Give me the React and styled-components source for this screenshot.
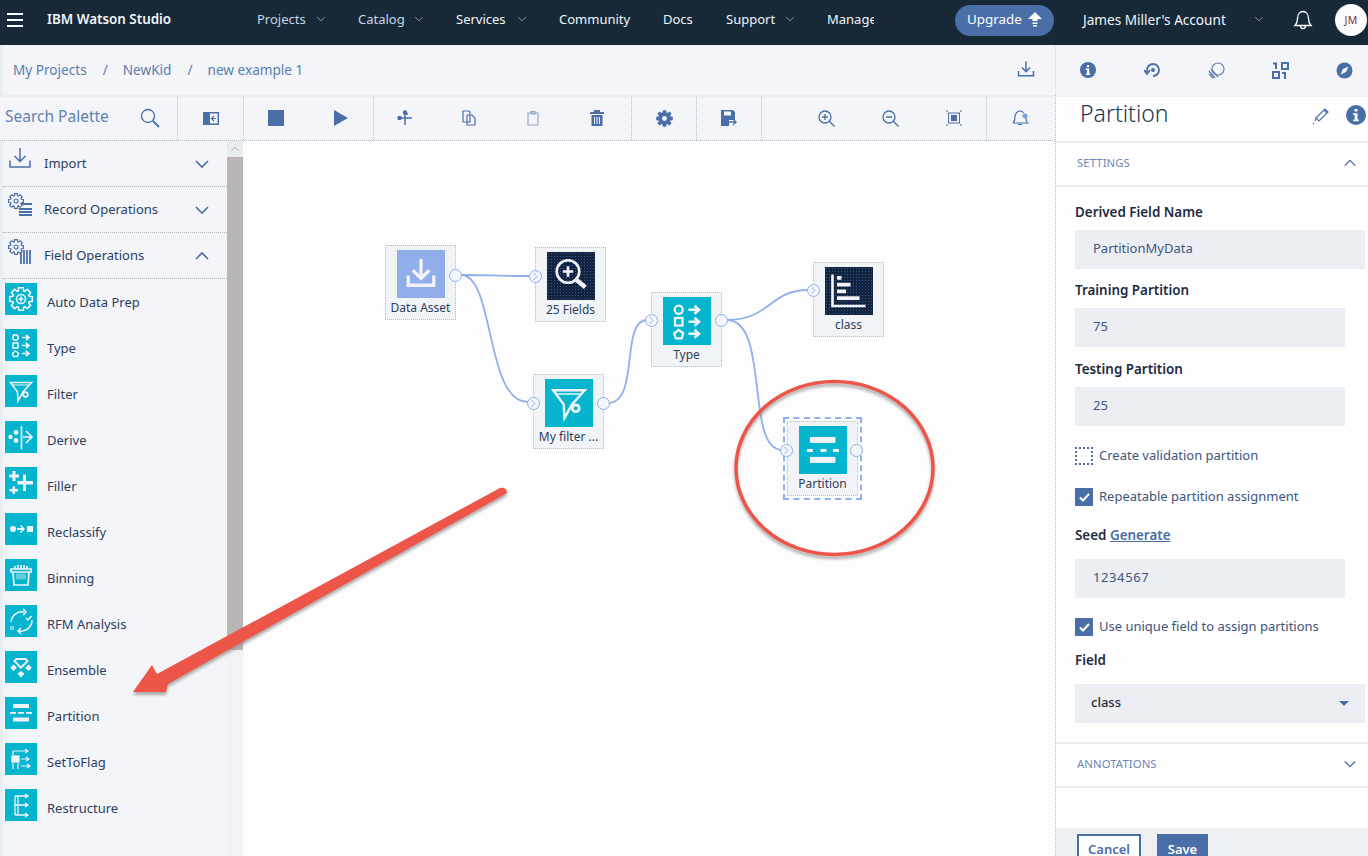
import React from "react";
import styled, { createGlobalStyle } from "styled-components";

const FONT = `"Noto Sans", "Open Sans", Arial, sans-serif`;
const BLUE = "#4a6ea8";
const INK = "#2c3e60";

const Global = createGlobalStyle`
  html, body { margin: 0; padding: 0; background: #fff; }
  * { box-sizing: border-box; }
  body { font-family: ${FONT}; }
`;

const Page = styled.div`
  position: relative; width: 1368px; height: 856px; overflow: hidden;
  display: flex; flex-direction: column; background: #fff;
`;
const Header = styled.header`
  height: 45px; flex: none; background: #172937; color: #f2f5fa; padding-bottom: 5px;
  display: flex; align-items: center; font-size: 13px;
`;
const Burger = styled.div`
  width: 16px; height: 14px; margin: 0 0 0 7px; flex: none;
  border-top: 2px solid #fff; border-bottom: 2px solid #fff; position: relative;
  &::after { content: ""; position: absolute; left: 0; right: 0; top: 4px; height: 2px; background: #fff; }
`;
const Brand = styled.div`
  width: 210px; margin-left: 24px; flex: none; font-weight: 600; font-size: 13.4px; white-space: nowrap; padding-bottom: 2px;
`;
const Nav = styled.nav`
  display: flex; align-items: center; gap: 32px; width: 698px; flex: none; white-space: nowrap; padding-bottom: 2px;
`;
const NavItem = styled.div`
  display: flex; align-items: center; flex: none; width: ${p => p.$w}px; overflow: hidden;
  color: ${p => p.$dim ? "#c9d5e8" : "#f2f5fa"}; justify-content: space-between;
`;
const Upgrade = styled.div`
  width: 99px; height: 31px; border-radius: 16px; background: ${BLUE}; color: #fff; flex: none;
  display: flex; align-items: center; padding: 0 12px 2px; justify-content: space-between; font-size: 13.4px;
`;
const Account = styled.div`
  margin-left: 29px; width: 181px; flex: none; display: flex; justify-content: space-between; align-items: center; white-space: nowrap; font-size: 13.6px; padding-bottom: 2px;
`;
const BellWrap = styled.div`
  margin-left: 29px; width: 20px; height: 22px; flex: none;
`;
const Avatar = styled.div`
  margin-left: 22px; width: 32px; height: 32px; flex: none; border-radius: 50%; background: #fbfbfb; color: #8a3040;
  display: flex; align-items: center; justify-content: center; font-size: 10.5px; letter-spacing: .4px;
`;

const Main = styled.div`
  flex: 1; display: grid; grid-template-columns: 1055px 313px; min-height: 0;
`;
const LeftCol = styled.div`
  display: flex; flex-direction: column; min-height: 0;
`;
const RightCol = styled.div`
  display: flex; flex-direction: column; min-height: 0; position: relative;
`;
const Crumbs = styled.div`
  height: 50px; flex: none; background: #f3f5f8; display: flex; align-items: center; padding: 0 19px 2px 10px;
  font-size: 13.6px; color: #5d7cae; border-left: 3px solid #e9eef4;
`;
const Crumb = styled.span`
  margin-right: ${p => p.$mr}px; white-space: nowrap;
`;
const PushRight = styled.div`
  margin-left: auto; display: flex;
`;
const Toolbar = styled.div`
  height: 46px; flex: none; background: #f3f5f8; display: flex;
  border-top: 2px solid #e9edf2; border-bottom: 1px dotted #aeb6c0;
`;
const ToolGroup = styled.div`
  width: ${p => p.$w}px; flex: none; display: flex; align-items: center; justify-content: ${p => p.$j || "flex-start"};
  border-right: ${p => p.$last ? "none" : "1px dotted #b5bcc6"};
  padding-left: ${p => p.$pl || 0}px; padding-bottom: 1px; gap: ${p => p.$gap || 0}px;
`;
const SearchText = styled.span`
  font-size: 15.5px; color: #5f83b2; padding: 0 0 4px 5px; white-space: nowrap; width: 140px;
`;
const ToolIcon = styled.span`
  width: 20px; height: 20px; flex: none; display: flex; align-items: center; justify-content: center; color: ${BLUE};
  opacity: ${p => p.$off ? .55 : 1}; margin-left: ${p => p.$ml || 0}px;
  svg { display: block; }
`;
const Work = styled.div`
  flex: 1; display: flex; min-height: 0;
`;
const Palette = styled.aside`
  width: 227px; flex: none; background: #f3f5f8; display: flex; flex-direction: column; border-left: 3px solid #e9eef4;
`;
const GroupRow = styled.div`
  height: 46px; flex: none; display: flex; align-items: center; padding: 0 17px 0 5px;
  border-bottom: 1px dotted #aeb6c0; font-size: 13px; color: ${INK}; white-space: nowrap;
`;
const GroupIcon = styled.span`
  width: 28px; height: 30px; flex: none; margin-top: -6px; color: ${BLUE}; margin-right: 8px;
  svg { display: block; }
`;
const GroupLabel = styled.span`
  flex: 1; padding-bottom: 2px;
`;
const ItemList = styled.div`
  display: flex; flex-direction: column; padding-top: 4px; gap: 14px;
`;
const Item = styled.div`
  height: 32px; display: flex; align-items: center; padding-left: 2px; gap: 10px; font-size: 13px; color: ${INK};
`;
const ItemLabel = styled.span`
  padding-top: 6px;
`;
const Tile = styled.div`
  width: ${p => p.$size}px; height: ${p => p.$size}px; flex: none; color: #f1f2fb;
  background: ${p => p.$dots ? "radial-gradient(circle, #2f5aa6 0.7px, #14233c 0.9px) 0 0 / 3px 3px" : (p.$bg || "#05b5ce")};
  svg { display: block; width: 100%; height: 100%; }
`;
const Scroll = styled.div`
  width: 16px; flex: none; display: flex; flex-direction: column;
  background: radial-gradient(circle, #c4c9cf 0.6px, #f0f2f5 0.7px) 0 0 / 2px 2px;
`;
const ScrollUp = styled.div`
  height: 16px; flex: none; background: #e8ebef; color: #8a8f98; display: flex; align-items: center; justify-content: center;
`;
const ScrollThumb = styled.div`
  height: 493px; flex: none; background: radial-gradient(circle, #aab2cc 0.5px, #bab6b7 0.7px) 0 0 / 8px 8px;
`;
const Canvas = styled.main`
  flex: 1; position: relative; background: #fdfdfe; overflow: hidden;
`;
const Wires = styled.svg`
  position: absolute; inset: 0; width: 100%; height: 100%;
`;
const Node = styled.div`
  position: absolute; left: ${p => p.$x - 243}px; top: ${p => p.$y - 141}px; width: 71px; height: 75px;
  background: #f1f4f7; border: 1px dotted #b4bbc4; display: flex; flex-direction: column; align-items: center; padding-top: 4px;
  font-size: 12px; color: ${INK}; white-space: nowrap;
`;
const NodeLabel = styled.span`
  margin-top: 1px; line-height: 18px;
`;
const Port = styled.div`
  position: absolute; left: ${p => p.$x - 243 - 6}px; top: ${p => p.$y - 141 - 6}px; width: 13px; height: 13px; border-radius: 50%;
  border: 1px solid #8fb0ea; background: #f3f6fa; color: #8fb0ea; display: flex; align-items: center; justify-content: center;
`;
const Selection = styled.div`
  position: absolute; left: ${783 - 243}px; top: ${417 - 141}px; width: 79px; height: 83px; border: 2px dashed #8db2ee;
`;
const Overlay = styled.svg`
  position: absolute; left: 0; top: 0; width: 1368px; height: 856px; pointer-events: none;
`;

const IconBar = styled.div`
  height: 50px; flex: none; background: #f3f5f8; display: flex; align-items: center; padding: 0 14px 0 22px; justify-content: space-between;
  border-left: 1px solid #e4e8ee;
`;
const Panel = styled.section`
  flex: 1; display: flex; flex-direction: column; min-height: 0; border-left: 1px dotted #aeb6c0; background: #fefefe;
`;
const TitleRow = styled.div`
  height: 46px; flex: none; display: flex; align-items: center; padding: 0 2px 8px 24px; font-size: 23px; font-weight: 300; color: #25344f; border-top: 2px solid #eef1f5;
`;
const Title = styled.span`
  flex: 1; padding-bottom: 4px;
`;
const Section = styled.div`
  height: 46px; flex: none; display: flex; align-items: center; justify-content: space-between; padding: 0 11px 2px 21px; font-size: 11.3px; letter-spacing: .1px;
  color: #6f86b4; border-top: 2px solid #eaeef3; border-bottom: 2px solid #eaeef3;
`;
const SectionLabel = styled.span`
  padding-bottom: 2px;
`;
const Form = styled.div`
  flex: none; display: flex; flex-direction: column; padding: 16px 3px 0 19px; height: 555px;
`;
const Label = styled.div`
  font-size: 13.4px; font-weight: 600; color: #1f2b40; line-height: 18px; margin: ${p => p.$mt || 0}px 0 ${p => p.$mb || 9}px;
  white-space: nowrap;
`;
const Generate = styled.span`
  color: #4a6ea8; text-decoration: underline;
`;
const Input = styled.div`
  height: 39px; flex: none; width: ${p => p.$w || 270}px; background: #ebeff3; display: flex; align-items: center; padding: 0 0 4px 18px;
  font-size: 13px; color: #40557c; letter-spacing: ${p => p.$ls || 0}px;
`;
const SelectBox = styled(Input)`
  padding: 0 16px 4px 16px; justify-content: space-between; font-weight: 500; color: #1f2b40; font-size: 13px;
`;
const Caret = styled.span`
  width: 0; height: 0; border-left: 5px solid transparent; border-right: 5px solid transparent; border-top: 5px solid ${BLUE}; margin-top: 4px;
`;
const CheckRow = styled.div`
  display: flex; align-items: center; gap: 6px; height: 18px; font-size: 13px; color: #40557c; white-space: nowrap;
  margin: ${p => p.$mt}px 0 0;
`;
const CheckText = styled.span`
  padding-bottom: 2px;
`;
const Box = styled.span`
  width: 18px; height: 18px; flex: none; display: flex; align-items: center; justify-content: center;
  background: ${p => p.$on ? BLUE : "#fff"}; border: ${p => p.$on ? "none" : `2px dotted ${BLUE}`};
`;
const Footer = styled.div`
  flex: 1; background: #eef1f4; display: flex; gap: 16px; padding: 6px 0 0 21px; margin-top: 40px;
`;
const Btn = styled.div`
  height: 32px; width: ${p => p.$w}px; flex: none; display: flex; align-items: center; justify-content: center; font-size: 13px; padding-bottom: 3px; font-weight: 600;
  border: 2px solid ${BLUE}; background: ${p => p.$primary ? BLUE : "#fff"}; color: ${p => p.$primary ? "#fff" : BLUE};
`;

const Chev = ({ up, size = 16, w = 1.6, color = BLUE }) => (
  <svg width={size} height={size} viewBox="0 0 16 16" fill="none" stroke={color} strokeWidth={w}>
    <path d={up ? "M2 11 L8 5 L14 11" : "M2 5 L8 11 L14 5"} />
  </svg>
);
const S = ({ children, size = 20, vb = 20, ...r }) => (
  <svg width={size} height={size} viewBox={`0 0 ${vb} ${vb}`} fill="none" stroke="currentColor" strokeWidth="1.5" {...r}>{children}</svg>
);
const gearPath = (cx, cy, r, R) => {
  let d = "";
  for (let i = 0; i < 8; i++) {
    const a0 = (i * Math.PI) / 4 - 0.2, a1 = (i * Math.PI) / 4 + 0.2, b0 = a1 + 0.12, b1 = a0 + Math.PI / 4 - 0.12;
    const p = (a, q) => `${(cx + q * Math.cos(a)).toFixed(1)} ${(cy + q * Math.sin(a)).toFixed(1)}`;
    d += `${i ? "L" : "M"}${p(a0, R)} L${p(a1, R)} L${p(b0, r)} L${p(b1, r)} `;
  }
  return d + "Z";
};

const tileIcons = {
  gear: <svg viewBox="0 0 32 32" fill="none" stroke="currentColor" strokeWidth="1.6"><path d={gearPath(16, 16, 8.5, 11.5)} /><circle cx="16" cy="16" r="4.500" /><path d="M16 13.500v5M13.500 16h5" /></svg>,
  type: <svg viewBox="0 0 32 32" fill="none" stroke="currentColor" strokeWidth="1.5"><circle cx="10.500" cy="8.500" r="2.700" /><rect x="8" y="14" width="5" height="5" /><path d="M10.500 22l3 2.200-1 3.300h-4l-1-3.300z" /><path d="M17 8.500h7M21 5.800l3 2.700-3 2.700M17 16.500h7M21 13.800l3 2.700-3 2.700M17 24.500h7M21 21.800l3 2.700-3 2.700" strokeWidth="1.700" /></svg>,
  filter: <svg viewBox="0 0 32 32" fill="none" stroke="currentColor" strokeWidth="1.600"><path d="M5.500 7.500h21l-8.500 9.500-5 9-.5-9z" /><path d="M8 10h16" strokeWidth="1" /><circle cx="20.500" cy="19.500" r="2.300" fill="#05b5ce" strokeWidth="1.800" /></svg>,
  derive: <svg viewBox="0 0 32 32" fill="none" stroke="currentColor" strokeWidth="1.700"><path d="M16.500 5v23" /><path d="M18 16h8M21 10l6 6-6 6" /><circle cx="5.500" cy="16" r="1.300" fill="currentColor" /><circle cx="11" cy="11.500" r="1.600" fill="currentColor" /><circle cx="11" cy="19.500" r="1.600" fill="currentColor" /></svg>,
  filler: <svg viewBox="0 0 32 32" fill="currentColor"><path d="M7.500 4h3v3.500h3.500v3H10.500V14h-3V10.500H4v-3h3.500z" /><path d="M18 7.500h3V14h7v3.500h-7V24h-3V17.500h-5.500V14H18z" /><path d="M7.500 19.500h2.500v2.500h3v2.500h-3V27H7.500v-2.500H4.500V22h3z" /></svg>,
  reclass: <svg viewBox="0 0 32 32" fill="currentColor"><circle cx="8" cy="16" r="3" /><rect x="22" y="13" width="6" height="6" /><path d="M12 15h5l-2-2 1-1 4 4-4 4-1-1 2-2h-5z" /></svg>,
  bin: <svg viewBox="0 0 32 32" fill="none" stroke="currentColor" strokeWidth="1.700"><path d="M6 10h20v3H6zM8 13l1 13h14l1-13" /><path d="M10 10V7M13 10V6M16 10V6M19 10V6M22 10V7" /><rect x="12" y="15.500" width="8" height="4" fill="currentColor" opacity=".4" /></svg>,
  rfm: <svg viewBox="0 0 32 32" fill="none" stroke="currentColor" strokeWidth="1.500"><path d="M6 17a11 11 0 0 1 13-10M18 4l3 3-3 3M27 15a11 11 0 0 1-13 11M16 23l-3 3 3 3" /><path d="M21 13l2 2 3.500-4" /><path d="M5 21h4v4H5z" fill="currentColor" opacity=".5" stroke="none" /></svg>,
  ens: <svg viewBox="0 0 32 32" fill="currentColor"><path d="M11 7h10l3 3-8 8-8-8zM12 9l-1.200 1 5.200 5.200 5.200-5.200-1.200-1z" fillRule="evenodd" /><path d="M8.500 13.500l3.300 3.300-3.300 3.300-3.300-3.300zM23.500 13.500l3.300 3.300-3.300 3.300-3.300-3.300zM16 20l3.500 2.800L16 26.500l-3.500-3.700z" /></svg>,
  part: <svg viewBox="0 0 32 32" fill="currentColor"><rect x="8" y="7" width="16" height="4" /><rect x="8" y="20.500" width="16" height="4" /><rect x="5" y="15" width="6" height="1.800" /><rect x="13" y="15" width="6" height="1.800" /><rect x="21" y="15" width="6" height="1.800" /></svg>,
  partNode: <svg viewBox="0 0 32 32" fill="currentColor"><rect x="7.300" y="7.300" width="17" height="4" /><rect x="7.300" y="20.600" width="17" height="4" /><rect x="5.300" y="15.300" width="4" height="2" /><rect x="14.300" y="15.300" width="4" height="2" /><rect x="22.600" y="15.300" width="4" height="2" /></svg>,
  flag: <svg viewBox="0 0 32 32" fill="none" stroke="currentColor" strokeWidth="1.200"><rect x="7" y="13" width="7" height="6" fill="currentColor" /><path d="M8 8h14M20 6l3 2-3 2M16 16h7M21 14l3 2-3 2M16 23h8M22 21l3 2-3 2M8 8v4M8 20v6M13 20v6" /></svg>,
  restr: <svg viewBox="0 0 32 32" fill="none" stroke="currentColor" strokeWidth="1.300"><path d="M10 7v19M10 7h12M10 16h12M10 26h12M20 5l3 2-3 2M20 14l3 2-3 2M20 24l3 2-3 2M13 7v19" /></svg>,
  asset: <svg viewBox="0 0 32 32" fill="none" stroke="currentColor" strokeWidth="2.200"><path d="M16 6v13M10.500 13.500 16 19l5.500-5.500M7.500 17v6.500h17V17" /></svg>,
  zoom: <svg viewBox="0 0 32 32" fill="none" stroke="currentColor" strokeWidth="1.800"><circle cx="14" cy="13" r="7.500" /><path d="M14 9.500v7M10.500 13h7" /><path d="M19.500 18.500l6 5" strokeWidth="3" /></svg>,
  chart: <svg viewBox="0 0 32 32" fill="none" stroke="currentColor"><path d="M5 5v21h22" strokeWidth="1.800" /><path d="M8 6h3v2.500H8zM8 10.500h9V13H8zM8 15h6v2.500H8zM8 19.500h15v2.500H8z" fill="currentColor" stroke="none" /></svg>,
};

const items = [
  ["gear", "Auto Data Prep"], ["type", "Type"], ["filter", "Filter"], ["derive", "Derive"],
  ["filler", "Filler"], ["reclass", "Reclassify"], ["bin", "Binning"], ["rfm", "RFM Analysis"],
  ["ens", "Ensemble"], ["part", "Partition"], ["flag", "SetToFlag"], ["restr", "Restructure"],
];

const DownloadIcon = ({ size = 24, w = 1.4 }) => (
  <svg width={size} height={size} viewBox="0 0 24 24" fill="none" stroke="currentColor" strokeWidth={w}>
    <path d="M12 2v13M6.500 10l5.500 5.500L17.500 10M2 14.500V21h20v-6.500" />
  </svg>
);
const GearsIcon = ({ bars }) => (
  <svg width="28" height="30" viewBox="0 0 28 30" fill="none" stroke="currentColor" strokeWidth="1.200">
    <path d={gearPath(8, 9, 5.500, 7.500)} /><circle cx="8" cy="9" r="2" />
    {bars ? <path d="M13 14v12M16 12v14M19 12v14M22 12v14" strokeWidth="1.800" /> : <path d="M13 12h11M11 17h13M11 20h13M11 23h13" strokeWidth="1.800" />}
  </svg>
);
const InfoIcon = ({ size = 16 }) => (
  <svg width={size} height={size} viewBox="0 0 16 16"><circle cx="8" cy="8" r="8" fill="currentColor" /><rect x="6.800" y="3.200" width="2.400" height="2" fill="#fff" /><path d="M5.800 6.500h3.400v5h1v1.500H5.800v-1.500h1.200V8H5.800z" fill="#fff" /></svg>
);
const Tick = () => (
  <svg width="11" height="9" viewBox="0 0 11 9" fill="none" stroke="#fff" strokeWidth="2"><path d="M1 4.500l3 3 6-6.500" /></svg>
);

const Wire = ({ d }) => <path d={d} fill="none" stroke="#8fb0ea" strokeWidth="1.800" />;
const InPort = ({ x, y }) => (
  <Port $x={x} $y={y}><svg width="7" height="9" viewBox="0 0 7 9" fill="none" stroke="currentColor" strokeWidth="1"><path d="M1.500 1l3.500 3.500L1.500 8" /></svg></Port>
);

export default function App() {
  return (
    <Page>
      <Global />
      <Header>
        <Burger />
        <Brand>IBM Watson Studio</Brand>
        <Nav>
          <NavItem $w={69} $dim>Projects <Chev size={10} w={1} color="#c9d5e8" /></NavItem>
          <NavItem $w={66} $dim>Catalog <Chev size={10} w={1} color="#c9d5e8" /></NavItem>
          <NavItem $w={71}>Services <Chev size={10} w={1} color="#c9d5e8" /></NavItem>
          <NavItem $w={72}>Community</NavItem>
          <NavItem $w={31}>Docs</NavItem>
          <NavItem $w={69}>Support <Chev size={10} w={1} color="#c9d5e8" /></NavItem>
          <NavItem $w={47}>Manage</NavItem>
        </Nav>
        <Upgrade>Upgrade
          <svg width="14" height="15" viewBox="0 0 14 15" fill="#fff"><path d="M7 0l7 7H9.500v2h-5V7H0zM4.500 10.500h5V12h-5zM5 13h4v1.500H5z" /></svg>
        </Upgrade>
        <Account>James Miller's Account <Chev size={10} w={1} color="#c9d5e8" /></Account>
        <BellWrap>
          <svg width="20" height="22" viewBox="0 0 20 22" fill="none" stroke="#fff" strokeWidth="1.300"><path d="M2 16.500c2-2 2.500-3.500 2.500-7C4.500 5 7 2.500 10 2.500s5.500 2.500 5.500 7c0 3.500.5 5 2.500 7z" /><path d="M7.500 17a2.500 2.500 0 0 0 5 0" /></svg>
        </BellWrap>
        <Avatar>JM</Avatar>
      </Header>
      <Main>
        <LeftCol>
          <Crumbs>
            <Crumb $mr={16}>My Projects</Crumb><Crumb $mr={15}>/</Crumb>
            <Crumb $mr={16}>NewKid</Crumb><Crumb $mr={15}>/</Crumb>
            <Crumb $mr={0}>new example 1</Crumb>
            <PushRight><ToolIcon><DownloadIcon size={18} w={2} /></ToolIcon></PushRight>
          </Crumbs>
          <Toolbar>
            <ToolGroup $w={178}>
              <SearchText>Search Palette</SearchText>
              <ToolIcon><svg width="20" height="20" viewBox="0 0 20 20" fill="none" stroke="currentColor" strokeWidth="1.300"><circle cx="8" cy="8" r="6.500" /><path d="M13 13l6 6" strokeWidth="2" /></svg></ToolIcon>
            </ToolGroup>
            <ToolGroup $w={66} $j="center">
              <ToolIcon><svg width="16" height="13" viewBox="0 0 16 13"><path d="M0 0h16v13H0z" fill="currentColor" /><path d="M7 1.500h7.500v10H7z" fill="#f3f5f8" /><path d="M13 6.500H9M11 4L8.500 6.500 11 9" stroke="currentColor" strokeWidth="1.200" fill="none" /></svg></ToolIcon>
            </ToolGroup>
            <ToolGroup $w={130} $pl={22} $gap={44}>
              <ToolIcon><svg width="16" height="16"><rect width="16" height="16" fill="currentColor" /></svg></ToolIcon>
              <ToolIcon><svg width="15" height="16" viewBox="0 0 15 16"><path d="M1 0l14 8-14 8z" fill="currentColor" /></svg></ToolIcon>
            </ToolGroup>
            <ToolGroup $w={258} $pl={21} $gap={44}>
              <ToolIcon><S size={16} vb={16}><path d="M8 2v13M1 8h14M8 4h3" /><circle cx="2.500" cy="8" r="1.500" fill="currentColor" /><circle cx="8" cy="2.500" r="1.500" fill="currentColor" /></S></ToolIcon>
              <ToolIcon><S size={16} vb={16} strokeWidth="1.200"><path d="M2 1h6l1 1v10H2zM6 5h5l3 3v7H6z" /></S></ToolIcon>
              <ToolIcon $off><S size={16} vb={16} strokeWidth="1.200"><path d="M3 3h10v12H3zM6 1.500h4V4H6z" /></S></ToolIcon>
              <ToolIcon><svg width="14" height="16" viewBox="0 0 14 16"><path d="M4 0h6v2h4v2H0V2h4zM1.500 5h11v11h-11z" fill="currentColor" /><path d="M4.500 7v7M7 7v7M9.500 7v7" stroke="#f3f5f8" /></svg></ToolIcon>
            </ToolGroup>
            <ToolGroup $w={65} $j="center">
              <ToolIcon><svg width="17" height="17" viewBox="0 0 17 17"><path d={gearPath(8.500, 8.500, 6.300, 8.500)} fill="currentColor" /><circle cx="8.500" cy="8.500" r="2.400" fill="#f3f5f8" /></svg></ToolIcon>
            </ToolGroup>
            <ToolGroup $w={65} $j="center">
              <ToolIcon><svg width="16" height="16" viewBox="0 0 16 16"><path d="M0 0h12l2 2v8H8v6H0z" fill="currentColor" /><rect x="3" y="1.500" width="7" height="4" fill="#f3f5f8" /><path d="M8 12h7M12 9l3 3-3 3" stroke="currentColor" fill="none" strokeWidth="1.300" /></svg></ToolIcon>
            </ToolGroup>
            <ToolGroup $w={225} $pl={54} $gap={44}>
              <ToolIcon><S size={17} vb={17} strokeWidth="1.300"><circle cx="7" cy="7" r="6" /><path d="M7 4v6M4 7h6M11.500 11.500l5 5" /></S></ToolIcon>
              <ToolIcon><S size={17} vb={17} strokeWidth="1.300"><circle cx="7" cy="7" r="6" /><path d="M4 7h6M11.500 11.500l5 5" /></S></ToolIcon>
              <ToolIcon><S size={16} vb={16} strokeWidth="1"><rect x="2.500" y="3" width="11" height="10" /><rect x="5.500" y="5.500" width="5" height="5" fill="currentColor" /><path d="M0 1h2M14 1h2M0 15h2M14 15h2" /></S></ToolIcon>
            </ToolGroup>
            <ToolGroup $w={68} $pl={23} $last>
              <ToolIcon><svg width="17" height="16" viewBox="0 0 17 16" fill="none" stroke="currentColor" strokeWidth="1.200"><path d="M1 13c2-2 2-3 2-6 0-3 2-6 5-6 1.500 0 2.500.5 3.500 2M14 8c0 2 .5 4 1.500 5H1M6 14.500h4" /><circle cx="13" cy="6" r="2.500" fill="#7a9ee6" stroke="none" /></svg></ToolIcon>
            </ToolGroup>
          </Toolbar>
          <Work>
            <Palette>
              <GroupRow><GroupIcon><DownloadIcon size={24} w={1.5} /></GroupIcon><GroupLabel>Import</GroupLabel><Chev /></GroupRow>
              <GroupRow><GroupIcon><GearsIcon /></GroupIcon><GroupLabel>Record Operations</GroupLabel><Chev /></GroupRow>
              <GroupRow><GroupIcon><GearsIcon bars /></GroupIcon><GroupLabel>Field Operations</GroupLabel><Chev up /></GroupRow>
              <ItemList>
                {items.map(([k, t]) => (
                  <Item key={t}><Tile $size={32}>{tileIcons[k]}</Tile><ItemLabel>{t}</ItemLabel></Item>
                ))}
              </ItemList>
            </Palette>
            <Scroll>
              <ScrollUp><Chev up size={10} w={1} color="#8a8f98" /></ScrollUp>
              <ScrollThumb />
            </Scroll>
            <Canvas>
              <Wires viewBox="243 141 812 715">
                <Wire d="M461 275 C480 275 505 276 530 276" />
                <Wire d="M461 275 C495 275 485 402 528 402" />
                <Wire d="M608 403 C640 403 620 320 647 320" />
                <Wire d="M727 320 C770 320 770 290 808 290" />
                <Wire d="M727 320 C770 320 745 450 782 450" />
              </Wires>
              <Node $x={385} $y={245}><Tile $size={48} $bg="#90aeea">{tileIcons.asset}</Tile><NodeLabel>Data Asset</NodeLabel></Node>
              <Node $x={535} $y={247}><Tile $size={48} $dots>{tileIcons.zoom}</Tile><NodeLabel>25 Fields</NodeLabel></Node>
              <Node $x={533} $y={374}><Tile $size={48}>{tileIcons.filter}</Tile><NodeLabel>My filter ...</NodeLabel></Node>
              <Node $x={651} $y={292}><Tile $size={48}>{tileIcons.type}</Tile><NodeLabel>Type</NodeLabel></Node>
              <Node $x={813} $y={262}><Tile $size={48} $dots>{tileIcons.chart}</Tile><NodeLabel>class</NodeLabel></Node>
              <Selection />
              <Node $x={787} $y={421}><Tile $size={48}>{tileIcons.partNode}</Tile><NodeLabel>Partition</NodeLabel></Node>
              <Port $x={455} $y={275} />
              <InPort x={535} y={276} />
              <InPort x={533} y={403} />
              <Port $x={603} $y={403} />
              <InPort x={651} y={320} />
              <Port $x={721} $y={320} />
              <InPort x={813} y={290} />
              <InPort x={786} y={450} />
              <Port $x={856} $y={450} />
            </Canvas>
          </Work>
        </LeftCol>
        <RightCol>
          <IconBar>
            <ToolIcon><InfoIcon /></ToolIcon>
            <ToolIcon><svg width="17" height="17" viewBox="0 0 17 17" fill="none" stroke="currentColor" strokeWidth="1.800"><path d="M3 10V8a6 6 0 1 1 6 6" /><path d="M0 8l3 4 3-4" /><circle cx="9" cy="8" r="2" fill="currentColor" stroke="none" /></svg></ToolIcon>
            <ToolIcon><svg width="17" height="17" viewBox="0 0 17 17" fill="none" stroke="#6f87ad" strokeWidth="1.200"><circle cx="10" cy="7" r="6" /><path d="M1 9l6 7M3 7l7 8M1 12l4 4" strokeWidth="1.600" /></svg></ToolIcon>
            <ToolIcon><svg width="17" height="17" viewBox="0 0 17 17" fill="none" stroke="currentColor" strokeWidth="2"><path d="M1 1.500h3V7" /><rect x="10" y="1" width="6" height="6" /><rect x="1" y="10" width="6" height="6" /><path d="M10 11h3v6" /></svg></ToolIcon>
            <ToolIcon><svg width="17" height="17" viewBox="0 0 17 17"><circle cx="8.500" cy="8.500" r="8" fill="currentColor" /><path d="M12.500 4.500L10 10 4.500 12.500 7 7z" fill="#fff" /></svg></ToolIcon>
          </IconBar>
          <Panel>
            <TitleRow>
              <Title>Partition</Title>
              <ToolIcon><svg width="19" height="19" viewBox="0 0 19 19" fill="none" stroke="currentColor" strokeWidth="1.200"><path d="M4 12L13 3l3 3-9 9zM12 4l3 3M4 12l-1 3M1 18l1-1" /></svg></ToolIcon>
              <ToolIcon $ml={15}><InfoIcon size={20} /></ToolIcon>
            </TitleRow>
            <Section><SectionLabel>SETTINGS</SectionLabel><Chev up size={14} /></Section>
            <Form>
              <Label>Derived Field Name</Label>
              <Input $w={290}>PartitionMyData</Input>
              <Label $mt={12}>Training Partition</Label>
              <Input>75</Input>
              <Label $mt={13}>Testing Partition</Label>
              <Input>25</Input>
              <CheckRow $mt={21}><Box /><CheckText>Create validation partition</CheckText></CheckRow>
              <CheckRow $mt={23}><Box $on><Tick /></Box><CheckText>Repeatable partition assignment</CheckText></CheckRow>
              <Label $mt={20} $mb={15}>Seed <Generate>Generate</Generate></Label>
              <Input $ls={.6}>1234567</Input>
              <CheckRow $mt={20}><Box $on><Tick /></Box><CheckText>Use unique field to assign partitions</CheckText></CheckRow>
              <Label $mt={15} $mb={15}>Field</Label>
              <SelectBox $w={290}>class<Caret /></SelectBox>
            </Form>
            <Section><SectionLabel>ANNOTATIONS</SectionLabel><Chev size={14} /></Section>
            <Footer>
              <Btn $w={64}>Cancel</Btn>
              <Btn $w={51} $primary>Save</Btn>
            </Footer>
          </Panel>
        </RightCol>
      </Main>
      <Overlay viewBox="0 0 1368 856">
        <defs>
          <filter id="sh" x="-10%" y="-10%" width="120%" height="120%">
            <feDropShadow dx="0" dy="3" stdDeviation="1.500" floodColor="#8f8a88" floodOpacity=".7" />
          </filter>
        </defs>
        <g filter="url(#sh)">
          <ellipse cx="834.500" cy="468" rx="98.500" ry="86.500" fill="none" stroke="#ee5449" strokeWidth="3.500" />
          <path d="M133 692 L152 665 L157 674 L500 488 Q507 487 507 493 L168 684 L166 692 Z" fill="#ee5449" />
        </g>
      </Overlay>
    </Page>
  );
}
